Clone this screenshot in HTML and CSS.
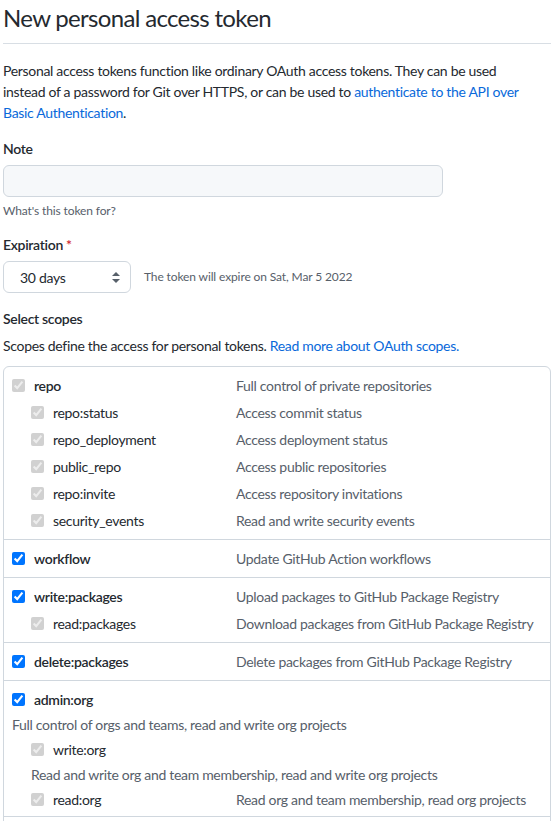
FILE: index.html
```
<!DOCTYPE html>
<html lang="en">
<head>
<meta charset="utf-8">
<title>New personal access token</title>
<link rel="stylesheet" href="styles.css">
</head>
<body>
<div class="page">
  <div class="subhead">
    <h2 class="subhead-heading">New personal access token</h2>
  </div>

  <p class="intro">Personal access tokens function like ordinary OAuth access tokens. They can be used<br>instead of a password for Git over HTTPS, or can be used to <a href="#">authenticate to the API over<br>Basic Authentication</a>.</p>

  <div class="form-group note-group">
    <label class="form-label" for="note">Note</label>
    <input class="form-control" id="note" type="text">
    <p class="hint">What's this token for?</p>
  </div>

  <div class="form-group expire-group">
    <label class="form-label">Expiration <span class="required">*</span></label>
    <div class="expire-row">
      <div class="select">
        <span>30 days</span>
        <svg class="select-arrows" width="8" height="11" viewBox="0 0 8 11" aria-hidden="true"><path d="M4 0 L8 4 H0 Z M0 7 H8 L4 11 Z" fill="#57606a"/></svg>
      </div>
      <span class="expire-note">The token will expire on Sat, Mar 5 2022</span>
    </div>
  </div>

  <div class="form-group scopes-group">
    <div class="form-label">Select scopes</div>
    <p class="scopes-text">Scopes define the access for personal tokens. <a href="#">Read more about OAuth scopes.</a></p>

    <div class="scope-list">
      <div class="scope-group">
        <div class="scope top">
          <label class="scope-name"><input type="checkbox" checked disabled>repo</label>
          <span class="scope-desc">Full control of private repositories</span>
        </div>
        <div class="scope sub">
          <label class="scope-name"><input type="checkbox" checked disabled>repo:status</label>
          <span class="scope-desc">Access commit status</span>
        </div>
        <div class="scope sub">
          <label class="scope-name"><input type="checkbox" checked disabled>repo_deployment</label>
          <span class="scope-desc">Access deployment status</span>
        </div>
        <div class="scope sub">
          <label class="scope-name"><input type="checkbox" checked disabled>public_repo</label>
          <span class="scope-desc">Access public repositories</span>
        </div>
        <div class="scope sub">
          <label class="scope-name"><input type="checkbox" checked disabled>repo:invite</label>
          <span class="scope-desc">Access repository invitations</span>
        </div>
        <div class="scope sub">
          <label class="scope-name"><input type="checkbox" checked disabled>security_events</label>
          <span class="scope-desc">Read and write security events</span>
        </div>
      </div>

      <div class="scope-group">
        <div class="scope top">
          <label class="scope-name"><input type="checkbox" checked>workflow</label>
          <span class="scope-desc">Update GitHub Action workflows</span>
        </div>
      </div>

      <div class="scope-group">
        <div class="scope top">
          <label class="scope-name"><input type="checkbox" checked>write:packages</label>
          <span class="scope-desc">Upload packages to GitHub Package Registry</span>
        </div>
        <div class="scope sub">
          <label class="scope-name"><input type="checkbox" checked disabled>read:packages</label>
          <span class="scope-desc">Download packages from GitHub Package Registry</span>
        </div>
      </div>

      <div class="scope-group">
        <div class="scope top">
          <label class="scope-name"><input type="checkbox" checked>delete:packages</label>
          <span class="scope-desc">Delete packages from GitHub Package Registry</span>
        </div>
      </div>

      <div class="scope-group stacked">
        <div class="scope top">
          <label class="scope-name"><input type="checkbox" checked>admin:org</label>
        </div>
        <div class="scope-desc line">Full control of orgs and teams, read and write org projects</div>
        <div class="scope sub">
          <label class="scope-name"><input type="checkbox" checked disabled>write:org</label>
        </div>
        <div class="scope-desc line sub-line">Read and write org and team membership, read and write org projects</div>
        <div class="scope sub">
          <label class="scope-name"><input type="checkbox" checked disabled>read:org</label>
          <span class="scope-desc">Read org and team membership, read org projects</span>
        </div>
      </div>

      <div class="scope-group">
        <div class="scope top">
          <label class="scope-name"><input type="checkbox">admin:public_key</label>
          <span class="scope-desc">Full control of user public keys</span>
        </div>
      </div>
    </div>
  </div>
</div>
</body>
</html>
```
FILE: styles.css
```
* {
  box-sizing: border-box;
}

body {
  margin: 0;
  padding: 3px 3px 0;
  background: #ffffff;
  color: #24292f;
  font-family: Lato, "Noto Sans", sans-serif;
  font-size: 14px;
  line-height: 21px;
  letter-spacing: -0.022em;
}

a {
  color: #0969da;
  text-decoration: none;
}

.subhead {
  padding-bottom: 10px;
  border-bottom: 1px solid #d8dee4;
}

.subhead-heading {
  margin: 0;
  font-size: 24px;
  line-height: 30px;
  font-weight: 400;
  letter-spacing: -0.028em;
}

.intro {
  margin: 16px 0 0;
}

.form-group {
  margin-top: 15px;
}

.expire-group {
  margin-top: 14px;
}

.form-label {
  display: block;
  font-weight: 600;
  margin-bottom: 6px;
}

.required {
  color: #cf222e;
}

.form-control {
  display: block;
  width: 440px;
  height: 32px;
  margin: 0;
  background: #f6f8fa;
  border: 1px solid #d0d7de;
  border-radius: 6px;
}

.hint {
  margin: 5px 0 0;
  font-size: 12px;
  line-height: 18px;
  letter-spacing: -0.01em;
  color: #57606a;
}

.expire-row {
  display: flex;
  align-items: center;
  gap: 13px;
}

.select {
  display: flex;
  align-items: center;
  justify-content: space-between;
  width: 128px;
  height: 32px;
  padding: 0 10px 0 16px;
  border: 1px solid #d0d7de;
  border-radius: 6px;
  background: #ffffff;
}

.expire-note {
  font-size: 12px;
  line-height: 18px;
  letter-spacing: -0.01em;
  color: #57606a;
}

.scopes-text {
  margin: 0;
}

.scope-list {
  margin-top: 10px;
  border: 1px solid #d0d7de;
  border-radius: 6px;
}

.scope-group {
  display: flex;
  flex-direction: column;
  gap: 6px;
  padding: 8px;
}

.scope-group + .scope-group {
  border-top: 1px solid #d0d7de;
}

.scope-group.stacked {
  gap: 4px;
  padding-bottom: 6px;
}

.scope {
  display: grid;
  grid-template-columns: 224px 1fr;
  align-items: center;
}

.scope-name {
  display: flex;
  align-items: center;
  gap: 9px;
}

.scope-name input {
  width: 13px;
  height: 13px;
  margin: 0;
}

.scope.top .scope-name {
  font-weight: 600;
}

.scope.sub .scope-name {
  padding-left: 19px;
}

.scope-desc {
  color: #57606a;
}

.scope-desc.sub-line {
  padding-left: 19px;
}
```
